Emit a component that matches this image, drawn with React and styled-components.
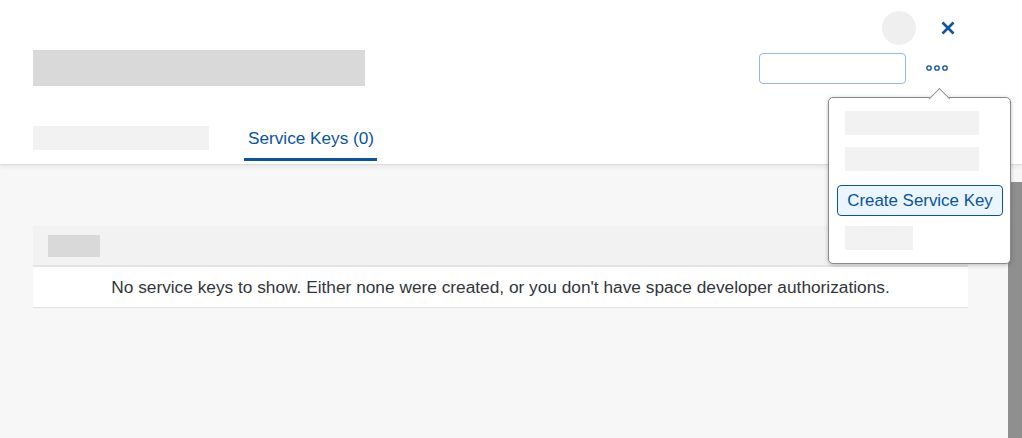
import React from "react";
import styled, { createGlobalStyle } from "styled-components";

const Global = createGlobalStyle`
  html, body { margin: 0; padding: 0; }
  body {
    width: 1022px;
    height: 438px;
    overflow: hidden;
    background: #f7f7f7;
    font-family: "Liberation Sans", Arial, sans-serif;
  }
  #root { height: 438px; }
`;

const BLUE = "#0854a0";

const Page = styled.div`
  position: relative;
  display: flex;
  flex-direction: column;
  height: 438px;
`;

const Header = styled.header`
  position: relative;
  z-index: 1;
  background: #fff;
  border-bottom: 1px solid #dcdcdc;
  box-shadow: 0 2px 4px rgba(0, 0, 0, 0.07);
  padding: 11px 0 0 33px;
  display: flex;
  flex-direction: column;
`;

const TopRow = styled.div`
  display: flex;
  justify-content: flex-end;
  align-items: center;
  height: 34px;
  padding-right: 67px;
  gap: 25px;
`;

const Avatar = styled.div`
  width: 34px;
  height: 34px;
  border-radius: 50%;
  background: #efefef;
`;

const IconButton = styled.button`
  border: 0;
  background: transparent;
  padding: 0;
  width: ${(p) => p.$w || 20}px;
  height: 20px;
  display: flex;
  align-items: center;
  justify-content: center;
  cursor: pointer;
`;

const TitleRow = styled.div`
  display: flex;
  align-items: flex-start;
  margin-top: 5px;
  height: 36px;
`;

const Placeholder = styled.div`
  width: ${(p) => p.$w}px;
  height: ${(p) => p.$h || 24}px;
  background: ${(p) => p.$c || "#f2f2f2"};
`;

const Spacer = styled.div`
  flex: 1;
`;

const SearchInput = styled.input`
  box-sizing: border-box;
  margin-top: 3px;
  width: 147px;
  height: 31px;
  border: 1px solid #95b8dc;
  border-radius: 4px;
  background: #fff;
  outline: none;
`;

const MoreWrap = styled.div`
  margin: 8px 74px 0 20px;
`;

const TabsRow = styled.nav`
  display: flex;
  align-items: flex-start;
  margin-top: 40px;
  height: 38px;
`;

const Tab = styled.div`
  margin-left: 35px;
  padding: 1px 3px 0 4px;
  height: 35px;
  box-sizing: border-box;
  border-bottom: 3px solid ${BLUE};
  color: ${BLUE};
  font-size: 17.2px;
  line-height: 22px;
  white-space: nowrap;
`;

const Body = styled.div`
  flex: 1;
  display: flex;
  min-height: 0;
`;

const Content = styled.main`
  flex: 1;
  padding: 61px 40px 0 33px;
`;

const Scrollbar = styled.div`
  width: 14px;
  margin-top: 17px;
  background: #8f8f8f;
`;

const Table = styled.section`
  display: flex;
  flex-direction: column;
`;

const TableHead = styled.div`
  height: 41px;
  background: #f2f2f2;
  border-bottom: 2px solid #e4e4e4;
  padding: 9px 15px 0;
  box-sizing: border-box;
`;

const EmptyRow = styled.div`
  height: 40px;
  background: #fff;
  border-bottom: 1px solid #e0e0e0;
  display: flex;
  align-items: center;
  justify-content: center;
  color: #32363a;
  font-size: 17.3px;
  white-space: nowrap;
`;

const Popover = styled.div`
  position: absolute;
  z-index: 5;
  left: 828px;
  top: 97px;
  width: 183px;
  height: 167px;
  box-sizing: border-box;
  background: #fff;
  border: 1px solid #8a8a8a;
  border-radius: 5px;
  box-shadow: 0 1px 4px rgba(0, 0, 0, 0.25);
  padding: 13px 8px 0;
  display: flex;
  flex-direction: column;
  align-items: flex-start;
`;

const Arrow = styled.div`
  position: absolute;
  top: -7px;
  left: 103px;
  width: 14px;
  height: 14px;
  background: #fff;
  border-left: 1px solid #8a8a8a;
  border-top: 1px solid #8a8a8a;
  transform: rotate(45deg);
`;

const MenuPlaceholder = styled(Placeholder)`
  margin-left: 8px;
  margin-bottom: ${(p) => p.$mb || 0}px;
`;

const MenuButton = styled.button`
  box-sizing: border-box;
  width: 166px;
  height: 31px;
  padding: 0;
  margin-bottom: 10px;
  background: #ebf5fe;
  border: 1px solid ${BLUE};
  border-radius: 4px;
  color: ${BLUE};
  font-family: "Liberation Sans", Arial, sans-serif;
  font-size: 16.9px;
  white-space: nowrap;
  cursor: pointer;
`;

const CloseIcon = () => (
  <svg width="14" height="14" viewBox="0 0 14 14">
    <path d="M1.5 1.5 L12.5 12.5 M12.5 1.5 L1.5 12.5" stroke={BLUE} strokeWidth="2.6" strokeLinecap="butt" fill="none" />
  </svg>
);

const MoreIcon = () => (
  <svg width="22" height="8" viewBox="0 0 22 8">
    {[3, 11, 19].map((cx) => (
      <circle key={cx} cx={cx} cy="4" r="2.2" stroke={BLUE} strokeWidth="1.3" fill="none" />
    ))}
  </svg>
);

export default function App() {
  return (
    <>
      <Global />
      <Page>
        <Header>
          <TopRow>
            <Avatar />
            <IconButton $w={14} aria-label="Close">
              <CloseIcon />
            </IconButton>
          </TopRow>
          <TitleRow>
            <Placeholder $w={332} $h={36} $c="#d9d9d9" />
            <Spacer />
            <SearchInput aria-label="Search" />
            <MoreWrap>
              <IconButton $w={22} aria-label="More">
                <MoreIcon />
              </IconButton>
            </MoreWrap>
          </TitleRow>
          <TabsRow>
            <Placeholder $w={176} $h={24} />
            <Tab>Service Keys (0)</Tab>
          </TabsRow>
        </Header>
        <Body>
          <Content>
            <Table>
              <TableHead>
                <Placeholder $w={52} $h={22} $c="#d9d9d9" />
              </TableHead>
              <EmptyRow>
                No service keys to show. Either none were created, or you don't have space developer authorizations.
              </EmptyRow>
            </Table>
          </Content>
          <Scrollbar />
        </Body>
        <Popover role="menu">
          <Arrow />
          <MenuPlaceholder $w={134} $mb={12} />
          <MenuPlaceholder $w={134} $mb={14} />
          <MenuButton>Create Service Key</MenuButton>
          <MenuPlaceholder $w={68} />
        </Popover>
      </Page>
    </>
  );
}
